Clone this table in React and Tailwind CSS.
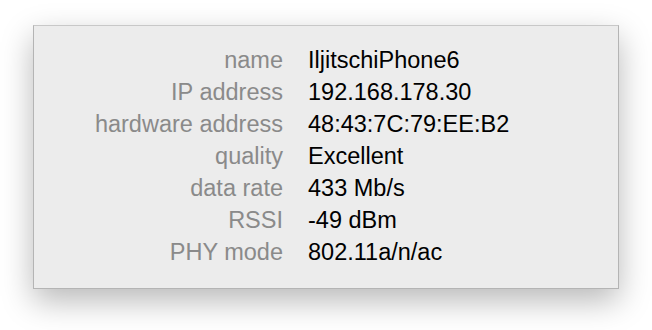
const rows = [
  ["name", "IljitschiPhone6"],
  ["IP address", "192.168.178.30"],
  ["hardware address", "48:43:7C:79:EE:B2"],
  ["quality", "Excellent"],
  ["data rate", "433 Mb/s"],
  ["RSSI", "-49 dBm"],
  ["PHY mode", "802.11a/n/ac"],
];

export default function App() {
  return (
    <div className="h-[330px] w-[652px] bg-white pt-[25px] pl-[33px] font-['Liberation_Sans',Arial,sans-serif]">
      <div className="h-[264px] w-[586px] border border-[#b4b4b4] border-t-[#c8c8c8] bg-[#ececec] pt-[18px] shadow-[0_12px_30px_rgba(0,0,0,0.28)]">
        <div className="grid grid-cols-[249px_1fr] gap-x-[25px] text-[23.5px] leading-[32px]">
          {rows.map(([label, value]) => (
            <div key={label} className="contents">
              <div className="text-right text-[#8a8a8a]">{label}</div>
              <div className="text-black">{value}</div>
            </div>
          ))}
        </div>
      </div>
    </div>
  );
}
